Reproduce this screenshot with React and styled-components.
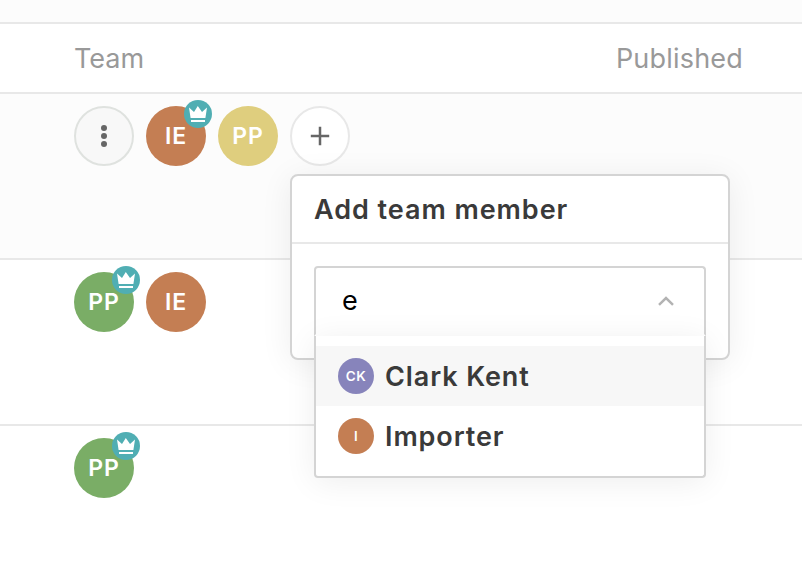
import React from "react";
import styled, { createGlobalStyle } from "styled-components";

const GlobalStyle = createGlobalStyle`
  *, *::before, *::after { box-sizing: border-box; }
  body {
    margin: 0;
    overflow: hidden;
    background: #fff;
    color: #3a3a3a;
    font-family: Inter, sans-serif;
    -webkit-font-smoothing: antialiased;
  }
`;

const Page = styled.main`
  width: 802px;
  height: 572px;
  overflow: hidden;
`;

const TopStrip = styled.div`
  height: 24px;
  background: #fcfcfc;
  border-bottom: 2px solid #e8e8e8;
`;

const HeaderRow = styled.div`
  display: flex;
  align-items: center;
  justify-content: space-between;
  height: 70px;
  padding: 1px 59px 0 74px;
  border-bottom: 2px solid #e8e8e8;
`;

const HeaderCell = styled.span`
  font-size: 27px;
  line-height: 34px;
  letter-spacing: ${(p) => p.$tracking};
  color: #999;
`;

const Row = styled.div`
  height: 166px;
  padding: 12px 74px;
  background: ${(p) => (p.$active ? "#fcfcfc" : "#fff")};
  border-bottom: 2px solid #e8e8e8;
`;

const Team = styled.div`
  display: flex;
  gap: 12px;
`;

const Avatar = styled.div`
  position: relative;
  display: flex;
  align-items: center;
  justify-content: center;
  flex: none;
  width: ${(p) => (p.$small ? 36 : 60)}px;
  height: ${(p) => (p.$small ? 36 : 60)}px;
  border-radius: 50%;
  background: ${(p) => p.$color};
  color: #fff;
  font-size: ${(p) => (p.$small ? 13.5 : 23)}px;
  font-weight: ${(p) => (p.$small ? 600 : 560)};
  letter-spacing: ${(p) => (p.$small ? 0.5 : 0.8)}px;
`;

const RoundButton = styled.button`
  display: flex;
  align-items: center;
  justify-content: center;
  width: 60px;
  height: 60px;
  padding: 0;
  border: 2px solid ${(p) => (p.$muted ? "#dfe2df" : "#e8e8e8")};
  border-radius: 50%;
  background: ${(p) => (p.$muted ? "#f8f8f8" : "#fff")};
`;

const Badge = styled.span`
  position: absolute;
  top: -6px;
  right: -6px;
  width: 28px;
  height: 28px;
  border-radius: 50%;
  background: #50aeb3;

  svg { display: block; }
`;

const AddAnchor = styled.div`
  position: relative;
`;

const Popover = styled.section`
  position: absolute;
  z-index: 2;
  top: 68px;
  left: 0;
  width: 440px;
  height: 186px;
  border: 2px solid #d4d4d4;
  border-radius: 8px;
  background: #fff;
  box-shadow: 0 4px 32px rgba(0, 0, 0, 0.07);
`;

const PopoverTitle = styled.h2`
  height: 68px;
  margin: 0;
  padding: 0 22px;
  border-bottom: 2px solid #e8e8e8;
  font-size: 27px;
  font-weight: 600;
  line-height: 67px;
  letter-spacing: 0.95px;
`;

const Select = styled.div`
  position: relative;
  margin: 22px 22px 0;
`;

const SelectControl = styled.div`
  display: flex;
  align-items: center;
  justify-content: space-between;
  height: 70px;
  padding: 0 30px 0 26px;
  border: 2px solid #d4d4d4;
  border-bottom-color: #fff;
  border-radius: 4px 4px 0 0;
  color: #000;
  font-size: 27px;
  line-height: 66px;
`;

const Menu = styled.ul`
  position: absolute;
  top: 70px;
  left: 0;
  width: 100%;
  height: 142px;
  margin: 0;
  padding: 10px 0;
  list-style: none;
  border: 2px solid #d4d4d4;
  border-top: 0;
  border-radius: 0 0 4px 4px;
  background: #fff;
  box-shadow: 0 4px 32px rgba(0, 0, 0, 0.07);
`;

const Option = styled.li`
  display: flex;
  align-items: center;
  gap: 11px;
  height: 60px;
  padding: 0 22px;
  background: ${(p) => (p.$focused ? "#f7f7f7" : "#fff")};
  font-size: 27px;
  font-weight: 600;
  letter-spacing: 0.9px;
`;

function CrownBadge() {
  return (
    <Badge>
      <svg width="28" height="28" viewBox="0 0 28 28" fill="#fff">
        <path d="M5 7.5l5 4.6L13.8 6l4.2 6.1 5-4.6L21.4 18H6.6z" />
        <path d="M7 20h14v2H7z" />
      </svg>
    </Badge>
  );
}

function Member({ initials, color, owner }) {
  return (
    <Avatar $color={color}>
      {initials}
      {owner && <CrownBadge />}
    </Avatar>
  );
}

const ORANGE = "#c47e53";
const GREEN = "#7aad66";

export default function App() {
  return (
    <Page>
      <GlobalStyle />
      <TopStrip />
      <HeaderRow>
        <HeaderCell $tracking="0">Team</HeaderCell>
        <HeaderCell $tracking="0.2px">Published</HeaderCell>
      </HeaderRow>
      <Row $active>
        <Team>
          <RoundButton $muted aria-label="More">
            <svg width="8" height="24" viewBox="0 0 8 24" fill="#666">
              <circle cx="4" cy="4" r="3" />
              <circle cx="4" cy="12" r="3" />
              <circle cx="4" cy="20" r="3" />
            </svg>
          </RoundButton>
          <Member initials="IE" color={ORANGE} owner />
          <Member initials="PP" color="#dfce7e" />
          <AddAnchor>
            <RoundButton aria-label="Add team member">
              <svg width="20" height="20" viewBox="0 0 20 20" fill="none" stroke="#666" strokeWidth="2.5">
                <path d="M10 .8v18.4M.8 10h18.4" />
              </svg>
            </RoundButton>
            <Popover>
              <PopoverTitle>Add team member</PopoverTitle>
              <Select>
                <SelectControl>
                  <span>e</span>
                  <svg width="16" height="10" viewBox="0 0 16 10" fill="none" stroke="#b3b3b3" strokeWidth="2.5">
                    <path d="M1 8.8L8 2l7 6.8" />
                  </svg>
                </SelectControl>
                <Menu>
                  <Option $focused>
                    <Avatar $small $color="#8784bb">CK</Avatar>
                    Clark Kent
                  </Option>
                  <Option>
                    <Avatar $small $color={ORANGE}>I</Avatar>
                    Importer
                  </Option>
                </Menu>
              </Select>
            </Popover>
          </AddAnchor>
        </Team>
      </Row>
      <Row>
        <Team>
          <Member initials="PP" color={GREEN} owner />
          <Member initials="IE" color={ORANGE} />
        </Team>
      </Row>
      <Row>
        <Team>
          <Member initials="PP" color={GREEN} owner />
        </Team>
      </Row>
    </Page>
  );
}
